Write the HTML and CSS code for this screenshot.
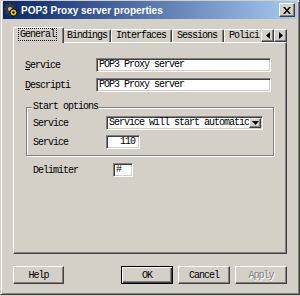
FILE: index.html
```html
<!DOCTYPE html>
<html>
<head>
  <title>POP3 Proxy server properties</title>
  <link rel="stylesheet" href="styles.css">
</head>
<body>

<div class="window">
  <div class="titlebar">
    <svg class="app-icon" width="14" height="14" viewBox="0 0 14 14">
      <path d="M5 0h2v2l1.5 .6 1.4-1.4 1.4 1.4-1.4 1.4.6 1.5h2v2h-2l-.6 1.5 1.4 1.4-1.4 1.4-1.4-1.4-1.5.6v2H5v-2l-1.5-.6-1.4 1.4-1.4-1.4 1.4-1.4L1.5 7H0V5h1.5l.6-1.5L.7 2.1 2.1.7l1.4 1.4L5 1.5z" fill="#3a3a3a"/>
      <circle cx="6" cy="6" r="2" fill="#c0c0c0"/>
      <circle cx="9.5" cy="9.5" r="3.5" fill="#f0d000" stroke="#000" stroke-width="1"/>
      <circle cx="9.5" cy="9.5" r="1.2" fill="#000"/>
    </svg>
    <span class="title">POP3 Proxy server properties</span>
    <span class="close">
      <svg width="8" height="7" viewBox="0 0 8 7">
        <path d="M0 0h2l2 2.5L6 0h2L5 3.5 8 7H6L4 4.5 2 7H0l3-3.5z" fill="#000"/>
      </svg>
    </span>
  </div>

  <div class="tabrow">
    <div class="tabs">
      <div class="tab active"><span class="focus">General</span></div>
      <div class="tab w-bind">Bindings</div>
      <div class="tab w-intf">Interfaces</div>
      <div class="tab w-sess">Sessions</div>
      <div class="tab w-pol">Polici</div>
    </div>
    <div class="scroller">
      <span class="arrow">
        <svg width="4" height="7" viewBox="0 0 4 7"><path d="M4 0v7L0 3.5z" fill="#000"/></svg>
      </span>
      <span class="arrow">
        <svg width="4" height="7" viewBox="0 0 4 7"><path d="M0 0v7l4-3.5z" fill="#000"/></svg>
      </span>
    </div>
  </div>

  <div class="panel">
    <div class="row">
      <label class="lbl"><u>S</u>ervice</label>
      <div class="field wide">POP3 Proxy server</div>
    </div>
    <div class="row">
      <label class="lbl"><u>D</u>escripti</label>
      <div class="field wide">POP3 Proxy server</div>
    </div>

    <fieldset class="group">
      <legend>Start options</legend>
      <div class="row">
        <label class="lbl grp">Service</label>
        <div class="field select">
          <span class="select-text">Service will start automatic</span>
          <span class="drop">
            <svg width="7" height="4" viewBox="0 0 7 4"><path d="M0 0h7L3.5 4z" fill="#000"/></svg>
          </span>
        </div>
      </div>
      <div class="row">
        <label class="lbl grp">Service</label>
        <div class="field num">110</div>
      </div>
    </fieldset>

    <div class="row delim">
      <label class="lbl dlm">Delimiter</label>
      <div class="field tiny">#</div>
    </div>
  </div>

  <div class="buttons">
    <button class="btn">Help</button>
    <span class="spacer"></span>
    <button class="btn default">OK</button>
    <button class="btn">Cancel</button>
    <button class="btn disabled">Apply</button>
  </div>
</div>

</body>
</html>
```

FILE: styles.css
```css
body {
  margin: 0;
  background-color: #d4d0c8;
  font-family: "Liberation Mono", monospace;
  font-size: 10px;
  letter-spacing: -1px;
  color: #000;
}

.window {
  width: 300px;
  height: 295px;
  box-sizing: border-box;
  border: 1px solid;
  border-color: #d4d0c8 #404040 #404040 #d4d0c8;
  box-shadow: inset 1px 1px #fff, inset -1px -1px #808080;
  padding: 0 2px 2px 2px;
  display: flex;
  flex-direction: column;
}

.titlebar {
  height: 18px;
  display: flex;
  align-items: center;
  background: linear-gradient(to right, #0a246a, #a6caf0);
  padding: 0 2px 0 1px;
}

.app-icon {
  margin-right: 3px;
}

.title {
  flex: 1;
  font-family: "Liberation Sans", Arial, sans-serif;
  font-weight: bold;
  font-size: 10px;
  letter-spacing: 0;
  color: #fff;
}

.close {
  width: 14px;
  height: 12px;
  display: flex;
  align-items: center;
  justify-content: center;
  background: #d4d0c8;
  border: 1px solid;
  border-color: #fff #404040 #404040 #fff;
  box-shadow: inset -1px -1px #808080;
}

/* tab strip */
.tabrow {
  display: flex;
  margin: 8px 0 -1px 10px;
  height: 16px;
}

.tabs {
  display: flex;
  align-items: flex-end;
  width: 246px;
  height: 16px;
  padding-left: 2px;
  overflow: hidden;
  flex: none;
}

.tab {
  flex: none;
  height: 13px;
  box-sizing: border-box;
  margin-bottom: 1px;
  padding: 0 4px;
  line-height: 11px;
  border-top: 1px solid #fff;
  border-left: 1px solid #fff;
  border-right: 1px solid #404040;
  border-top-left-radius: 2px;
  border-top-right-radius: 2px;
  box-shadow: inset -1px 0 #808080;
  white-space: nowrap;
}

.tab.active {
  position: relative;
  height: 16px;
  width: 51px;
  margin: 0 -2px;
  padding: 1px 0 0 5px;
  background: #d4d0c8;
}

.w-bind { width: 49px; }
.w-intf { width: 61px; }
.w-sess { width: 52px; }
.w-pol { width: 44px; }

.focus {
  outline: 1px dotted #000;
  outline-offset: 0;
  padding: 0 1px;
}

.scroller {
  display: flex;
  margin-top: 2px;
}

.arrow {
  width: 13px;
  height: 13px;
  box-sizing: border-box;
  display: flex;
  align-items: center;
  justify-content: center;
  border: 1px solid;
  border-color: #fff #404040 #404040 #fff;
  box-shadow: inset -1px -1px #808080;
}

/* tab page */
.panel {
  width: 274px;
  height: 212px;
  box-sizing: border-box;
  margin-left: 10px;
  padding: 15px 0 0 11px;
  border-left: 1px solid #fff;
  border-top: 1px solid #fff;
  border-right: 1px solid #404040;
  border-bottom: 1px solid #404040;
  box-shadow: inset -1px -1px #808080;
}

.row {
  display: flex;
  align-items: center;
  height: 14px;
  margin-bottom: 6px;
}

.lbl {
  width: 71px;
  flex: none;
}

.lbl.grp { width: 73px; }
.lbl.dlm { width: 80px; }

.field {
  height: 14px;
  box-sizing: border-box;
  background: #fff;
  border: 1px solid;
  border-color: #808080 #fff #fff #808080;
  box-shadow: inset 1px 1px #404040, inset -1px -1px #d4d0c8;
  padding: 0 2px;
  line-height: 11px;
  white-space: nowrap;
  overflow: hidden;
}

.field.wide { width: 175px; }

.field.select {
  width: 157px;
  display: flex;
  padding-right: 1px;
}

.select-text {
  flex: 1;
  overflow: hidden;
}

.drop {
  width: 12px;
  height: 10px;
  margin-top: 1px;
  box-sizing: border-box;
  display: flex;
  align-items: center;
  justify-content: center;
  background: #d4d0c8;
  border: 1px solid;
  border-color: #fff #404040 #404040 #fff;
  box-shadow: inset -1px -1px #808080;
}

.field.num {
  width: 34px;
  text-align: right;
  padding-right: 4px;
}

.field.tiny {
  width: 20px;
}

.group {
  width: 248px;
  box-sizing: border-box;
  margin: 10px 0 0 1px;
  padding: 4px 0 1px 6px;
  border: 1px solid #808080;
  box-shadow: 1px 1px #fff, inset 1px 1px #fff;
}

.group legend {
  padding: 0 1px;
  margin-left: -1px;
  line-height: 10px;
  background: #d4d0c8;
}

.group .row {
  margin-bottom: 5px;
}

.delim {
  margin-top: 7px;
  padding-left: 8px;
}

/* dialog buttons */
.buttons {
  display: flex;
  gap: 5px;
  margin: 12px 0 0 10px;
  width: 274px;
}

.spacer {
  flex: 1;
}

.btn {
  width: 52px;
  height: 18px;
  box-sizing: border-box;
  font-family: inherit;
  font-size: 10px;
  letter-spacing: -1px;
  background: #d4d0c8;
  border: 1px solid;
  border-color: #fff #404040 #404040 #fff;
  box-shadow: inset -1px -1px #808080;
  padding: 0;
  color: #000;
}

.btn:first-child {
  width: 51px;
}

.btn.default {
  border: 1px solid #000;
  box-shadow: inset 1px 1px #fff, inset -1px -1px #404040, inset -2px -2px #808080;
}

.btn.disabled {
  color: #808080;
  text-shadow: 1px 1px #fff;
}
```
